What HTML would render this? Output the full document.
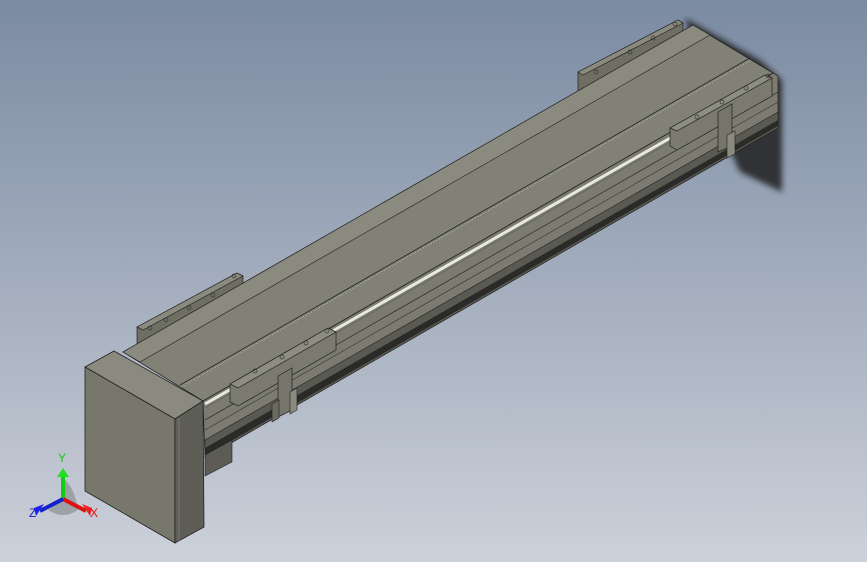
<!DOCTYPE html>
<html><head><meta charset="utf-8"><style>
html,body{margin:0;padding:0;width:867px;height:562px;overflow:hidden}
body{background:linear-gradient(180deg,#7b8ba3 0%,#a3adbd 50%,#ccd1da 100%)}
svg{position:absolute;left:0;top:0}
text{font-family:"Liberation Sans",sans-serif;font-size:12px}
</style></head><body>
<svg width="867" height="562" viewBox="0 0 867 562">
<defs>
<linearGradient id="sh" x1="0" y1="0" x2="1" y2="0"><stop offset="0" stop-color="#1a1a1a" stop-opacity=".9"/><stop offset="1" stop-color="#2a2a2a" stop-opacity=".5"/></linearGradient>
<filter id="bl"><feGaussianBlur stdDeviation="3"/></filter>
</defs>
<!-- shadow -->
<g filter="url(#bl)">
<polygon points="685,18 760,60 782,80 782,192 740,172 730,150" fill="#202020" opacity=".85"/>
</g>
<!-- back right bar -->
<polygon points="578,72 678,20 683,23 683,42 583,94 578,91" fill="#6e6e63" stroke="#222" stroke-width=".7"/>
<polygon points="578,72 678,20 683,23 583,75" fill="#8a8a7e" stroke="#222" stroke-width=".7"/>
<!-- back left bar -->
<polygon points="137,327 237,273 243,276 243,296 143,350 137,347" fill="#6e6e63" stroke="#222" stroke-width=".7"/>
<polygon points="137,327 237,273 243,276 143,330" fill="#8a8a7e" stroke="#222" stroke-width=".7"/>
<!-- beam front side -->
<polygon points="203,401 773,73 778,76 778,128 205,458" fill="#7b7b70" stroke="#222" stroke-width=".7"/>
<polygon points="205,440 778,112 778,128 205,458" fill="#5a5a52" stroke="#222" stroke-width=".6"/>
<polygon points="205,448 778,120 778,126 205,456" fill="#2a2a28"/>
<line x1="205" y1="420" x2="778" y2="92" stroke="#333" stroke-width=".8"/>
<line x1="205" y1="430" x2="778" y2="102" stroke="#333" stroke-width=".6"/>
<!-- lower block -->
<polygon points="205,455 232,440 232,462 205,476" fill="#5c5c55" stroke="#222" stroke-width=".6"/>
<!-- rod -->
<line x1="205" y1="404" x2="672" y2="137" stroke="#e8e8e0" stroke-width="3"/>
<line x1="205" y1="408" x2="672" y2="141" stroke="#666" stroke-width="1"/>
<!-- beam top -->
<polygon points="123,352 693,25 773,73 203,401" fill="#818176" stroke="#222" stroke-width=".8"/>
<polygon points="123,352 693,25 710,35 140,362" fill="#8a8a7f" stroke="#222" stroke-width=".6"/>
<line x1="180" y1="385" x2="750" y2="58" stroke="#222" stroke-width=".8"/>
<line x1="181" y1="387" x2="751" y2="60" stroke="#ddd" stroke-width=".6" stroke-dasharray="1 2"/>
<!-- right carriage -->
<polygon points="670,128 765,75 772,78 772,96 677,150 670,146" fill="#7a7a6f" stroke="#222" stroke-width=".7"/>
<polygon points="670,128 765,75 772,78 677,131" fill="#8d8d82" stroke="#222" stroke-width=".7"/>
<polygon points="718,112 732,104 732,146 718,152" fill="#75756b" stroke="#222" stroke-width=".7"/>
<polygon points="727,135 735,131 735,154 727,158" fill="#8a8a7f" stroke="#222" stroke-width=".6"/>
<!-- left carriage -->
<polygon points="230,384 328,328 336,332 336,350 238,406 230,402" fill="#7a7a6f" stroke="#222" stroke-width=".7"/>
<polygon points="230,384 328,328 336,332 238,388" fill="#8d8d82" stroke="#222" stroke-width=".7"/>
<polygon points="278,376 292,368 292,410 278,417" fill="#75756b" stroke="#222" stroke-width=".7"/>
<polygon points="290,392 297,388 297,410 290,414" fill="#8a8a7f" stroke="#222" stroke-width=".6"/>
<polygon points="272,404 279,400 279,418 272,422" fill="#6a6a60" stroke="#222" stroke-width=".6"/>
<!-- holes -->
<g fill="none" stroke="#333" stroke-width=".7">
<circle cx="150" cy="328" r="2"/><circle cx="166" cy="320" r="2"/><circle cx="189" cy="308" r="2"/><circle cx="213" cy="295" r="2"/><circle cx="234" cy="276" r="2"/>
<circle cx="596" cy="72" r="2"/><circle cx="630" cy="52" r="2"/><circle cx="653" cy="38" r="2"/><circle cx="675" cy="24" r="2"/>
<circle cx="255" cy="371" r="2"/><circle cx="282" cy="357" r="2"/><circle cx="306" cy="343" r="2"/><circle cx="327" cy="331" r="2"/>
<circle cx="697" cy="117" r="2"/><circle cx="722" cy="102" r="2"/><circle cx="746" cy="88" r="2"/><circle cx="768" cy="76" r="2"/>
</g>
<!-- end plate -->
<polygon points="85,367 114,351 203,401 175,419" fill="#8a8a7f" stroke="#222" stroke-width=".8"/>
<polygon points="85,367 175,419 175,543 85,491" fill="#77776b" stroke="#222" stroke-width=".8"/>
<polygon points="175,419 203,401 204,527 175,543" fill="#5e5e57" stroke="#222" stroke-width=".8"/>
<line x1="179" y1="418" x2="179" y2="541" stroke="#888" stroke-width=".6"/>
<!-- triad -->
<path d="M63,499 L48,510 Q63,520 78,510 Z M63,499 L63,478 Q75,488 78,510 Z" fill="#555" opacity=".35"/>
<line x1="63" y1="499" x2="63" y2="474" stroke="#1c1" stroke-width="4"/>
<polygon points="57,477 69,477 63,468" fill="#2d2"/>
<line x1="63" y1="499" x2="86" y2="511" stroke="#d11" stroke-width="4"/>
<polygon points="82,504 90,516 92,508" fill="#e22"/>
<line x1="63" y1="499" x2="40" y2="511" stroke="#12c" stroke-width="4"/>
<polygon points="44,504 36,516 34,508" fill="#22e"/>
<text x="58" y="462" fill="#1c1">Y</text>
<text x="90" y="517" fill="#d11">X</text>
<text x="29" y="517" fill="#12c">Z</text>
</svg>
</body></html>
